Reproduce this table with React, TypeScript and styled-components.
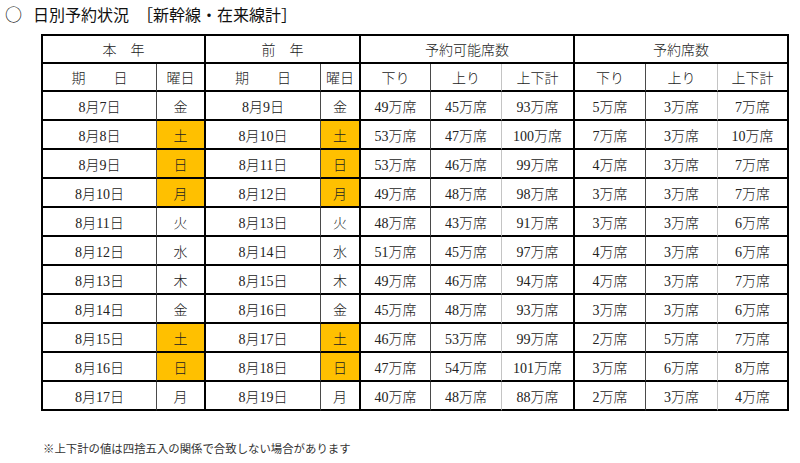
import styled, { createGlobalStyle } from "styled-components";

const GlobalStyle = createGlobalStyle`
  body {
    margin: 0;
    background: #ffffff;
    font-family: "Liberation Serif", "Noto Sans CJK JP", serif;
    color: #1a1a1a;
  }
`;

const Page = styled.div`
  width: 800px;
  height: 463px;
  padding-top: 3px;
  box-sizing: border-box;
`;

const Title = styled.div`
  margin-left: 5px;
  font-size: 16px;
  line-height: 22px;
  height: 22px;
  color: #111;
  white-space: pre;
`;

const Circle = styled.span`
  display: inline-block;
  width: 28px;
  font-family: "Noto Sans CJK JP", sans-serif;
  font-size: 17px;
`;

const Table = styled.table`
  margin: 9px 0 0 41px;
  border-collapse: separate;
  border-spacing: 0;
  table-layout: fixed;
  width: 748px;
  border-top: 2px solid #000;
  border-left: 2px solid #000;
`;

const Cell = styled.td<{ $edge?: "thick" | "dark" | "light"; $hl?: boolean; $h?: number }>`
  box-sizing: border-box;
  height: ${(p) => p.$h ?? 29}px;
  padding: 0;
  text-align: center;
  vertical-align: middle;
  font-size: 14px;
  font-weight: 300;
  color: #222;
  white-space: pre;
  background: ${(p) => (p.$hl ? "#ffc000" : "#ffffff")};
  border-bottom: 2px solid #000;
  border-right: ${(p) =>
    p.$edge === "dark"
      ? "1px solid #4a4a4a"
      : p.$edge === "light"
        ? "1px solid #c4c4c4"
        : "2px solid #000"};
`;

const Note = styled.div`
  margin: 30px 0 0 43px;
  font-size: 11.4px;
  line-height: 16px;
  color: #333;
`;

const widths = [114, 49, 115, 40, 70, 71, 73, 71, 72, 71];
const edges: ("thick" | "dark" | "light")[] = [
  "dark", "thick", "dark", "thick", "dark", "light", "thick", "dark", "light", "thick",
];

type Row = [string, string, string, string, number, number, number, number, number, number];

const rows: Row[] = [
  ["8月7日", "金", "8月9日", "金", 49, 45, 93, 5, 3, 7],
  ["8月8日", "土", "8月10日", "土", 53, 47, 100, 7, 3, 10],
  ["8月9日", "日", "8月11日", "日", 53, 46, 99, 4, 3, 7],
  ["8月10日", "月", "8月12日", "月", 49, 48, 98, 3, 3, 7],
  ["8月11日", "火", "8月13日", "火", 48, 43, 91, 3, 3, 6],
  ["8月12日", "水", "8月14日", "水", 51, 45, 97, 4, 3, 6],
  ["8月13日", "木", "8月15日", "木", 49, 46, 94, 4, 3, 7],
  ["8月14日", "金", "8月16日", "金", 45, 48, 93, 3, 3, 6],
  ["8月15日", "土", "8月17日", "土", 46, 53, 99, 2, 5, 7],
  ["8月16日", "日", "8月18日", "日", 47, 54, 101, 3, 6, 8],
  ["8月17日", "月", "8月19日", "月", 40, 48, 88, 2, 3, 4],
];

// rows whose 曜日 cells are marked (weekends and the holiday)
const marked = new Set(["8月8日", "8月9日", "8月10日", "8月15日", "8月16日"]);

const subHeads = ["期　　日", "曜日", "期　　日", "曜日", "下り", "上り", "上下計", "下り", "上り", "上下計"];

export default function App() {
  return (
    <Page>
      <GlobalStyle />
      <Title>
        <Circle>○</Circle>日別予約状況　［新幹線・在来線計］
      </Title>
      <Table>
        <colgroup>
          {widths.map((w, i) => (
            <col key={i} style={{ width: w }} />
          ))}
        </colgroup>
        <tbody>
          <tr>
            <Cell colSpan={2} $h={28}>本　年</Cell>
            <Cell colSpan={2} $h={28}>前　年</Cell>
            <Cell colSpan={3} $h={28}>予約可能席数</Cell>
            <Cell colSpan={3} $h={28}>予約席数</Cell>
          </tr>
          <tr>
            {subHeads.map((t, i) => (
              <Cell key={i} $edge={edges[i]} $h={28}>
                {t}
              </Cell>
            ))}
          </tr>
          {rows.map((r) => {
            const hl = marked.has(r[0]);
            return (
              <tr key={r[0]}>
                {r.map((v, i) => (
                  <Cell key={i} $edge={edges[i]} $hl={hl && (i === 1 || i === 3)}>
                    {typeof v === "number" ? `${v}万席` : v}
                  </Cell>
                ))}
              </tr>
            );
          })}
        </tbody>
      </Table>
      <Note>※上下計の値は四捨五入の関係で合致しない場合があります</Note>
    </Page>
  );
}
